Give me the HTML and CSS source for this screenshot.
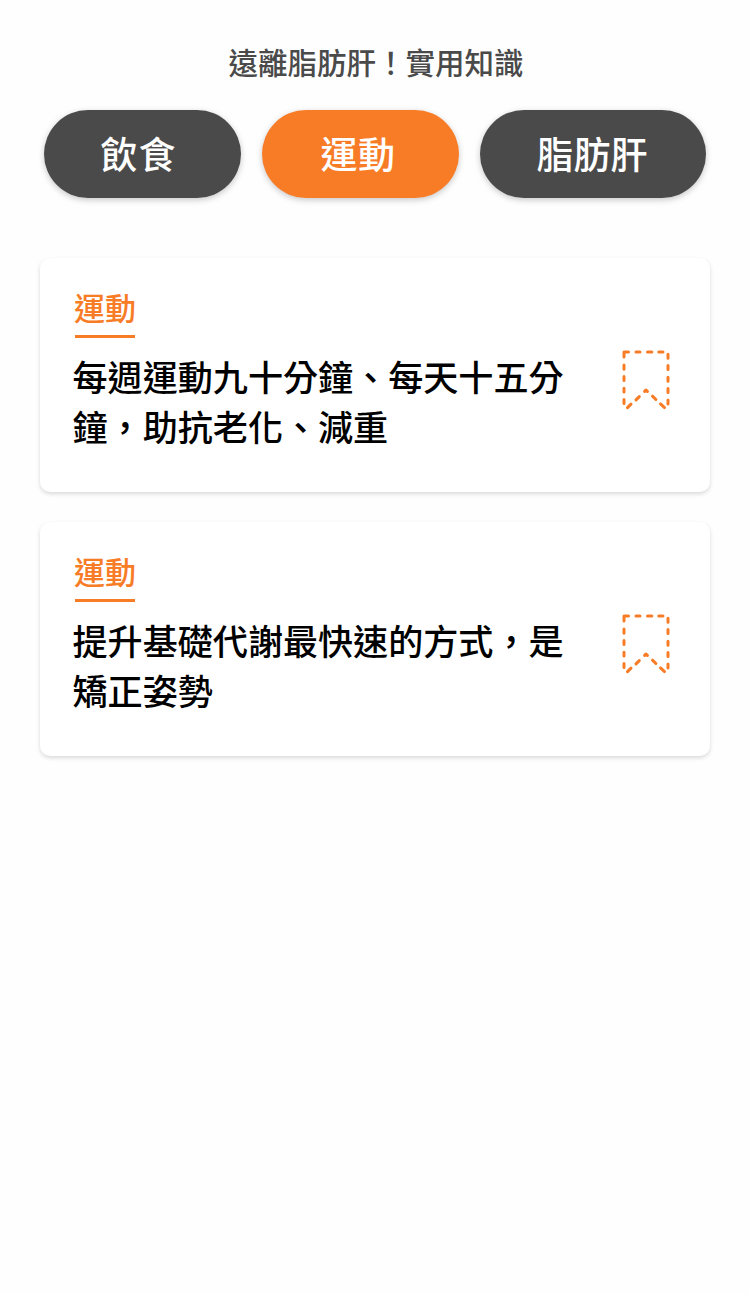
FILE: index.html
```html
<!DOCTYPE html>
<html lang="zh-Hant">
<head>
<meta charset="utf-8">
<title>實用知識</title>
<link rel="stylesheet" href="styles.css">
</head>
<body>
<svg class="defs" width="0" height="0">
  <symbol id="bookmark" viewBox="0 0 50 62">
    <path d="M3 8V3H7.5M15 3H19M26.5 3H30.8M37.8 3H42M3 16V20.3M3 27.5V31.6M3 39.2V43M3 50.6V54.6M47 5.2V9.3M47 16.5V20.6M47 28.2V32.3M47 39.6V43.6M47 51V55M6.5 58.6L10 55.2M15 50.9L18.3 47.6M23.6 42.4L25 41L26.4 42.4M31.5 47.2L34.9 50.5M39.5 54.9L43.5 58.6"/>
  </symbol>
</svg>
<main class="page">
  <h1 class="title">遠離脂肪肝！實用知識</h1>
  <nav class="tabs">
    <button class="tab tab-spaced">飲食</button>
    <button class="tab tab-active">運動</button>
    <button class="tab tab-wide">脂肪肝</button>
  </nav>
  <section class="list">
    <article class="card">
      <div class="content">
        <span class="tag">運動</span>
        <h2 class="headline">每週運動九十分鐘、每天十五分<br>鐘，助抗老化、減重</h2>
      </div>
      <svg class="bookmark"><use href="#bookmark"/></svg>
    </article>
    <article class="card">
      <div class="content">
        <span class="tag">運動</span>
        <h2 class="headline">提升基礎代謝最快速的方式，是<br>矯正姿勢</h2>
      </div>
      <svg class="bookmark"><use href="#bookmark"/></svg>
    </article>
  </section>
</main>
</body>
</html>
```
FILE: styles.css
```css
* { box-sizing: border-box; }
body {
  margin: 0;
  background: #fefefe;
  font-family: "Noto Sans CJK TC", sans-serif;
  font-weight: 500;
}
.defs { display: block; }
.page { padding: 39px 40px 0; min-height: 1294px; }
.title {
  margin: 0;
  height: 44px;
  line-height: 44px;
  font-size: 29.5px;
  font-weight: 500;
  text-align: center;
  color: #4a4a4a;
  padding-left: 2px;
}
.tabs { display: flex; gap: 21px; padding: 0 4px; margin-top: 27px; }
.tab {
  width: 197px;
  height: 88px;
  padding: 0 2px 2px 0;
  border: 0;
  border-radius: 44px;
  background: #4a4a4a;
  color: #fff;
  font: inherit;
  font-size: 37px;
  line-height: 86px;
  box-shadow: 0 2px 6px rgba(0, 0, 0, .22);
}
.tab-spaced { padding-right: 8px; letter-spacing: 1px; }
.tab-active { padding-right: 5px; background: #f87c26; letter-spacing: .4px; }
.tab-wide { width: 226px; }
.list { display: flex; flex-direction: column; gap: 30px; margin-top: 60px; }
.card {
  display: flex;
  height: 234px;
  padding: 27px 39px 0 32.5px;
  justify-content: space-between;
  background: #fff;
  border-radius: 10px;
  box-shadow: 0 2px 4px rgba(0, 0, 0, .15);
}
.content { display: flex; flex-direction: column; align-items: flex-start; }
.tag {
  height: 53px;
  margin-left: 1.5px;
  line-height: 44px;
  font-size: 31px;
  color: #f87c26;
  background: linear-gradient(#f87c26, #f87c26) 1px 100% / 60px 3px no-repeat;
}
.headline {
  margin: 13px 0 0;
  font-size: 35.1px;
  font-weight: 500;
  line-height: 50px;
  color: #000;
  white-space: nowrap;
}
.bookmark {
  width: 50px;
  height: 62px;
  margin-top: 64px;
  fill: none;
  stroke: #f87c26;
  stroke-width: 3;
  stroke-linecap: round;
  stroke-linejoin: round;
}
```
